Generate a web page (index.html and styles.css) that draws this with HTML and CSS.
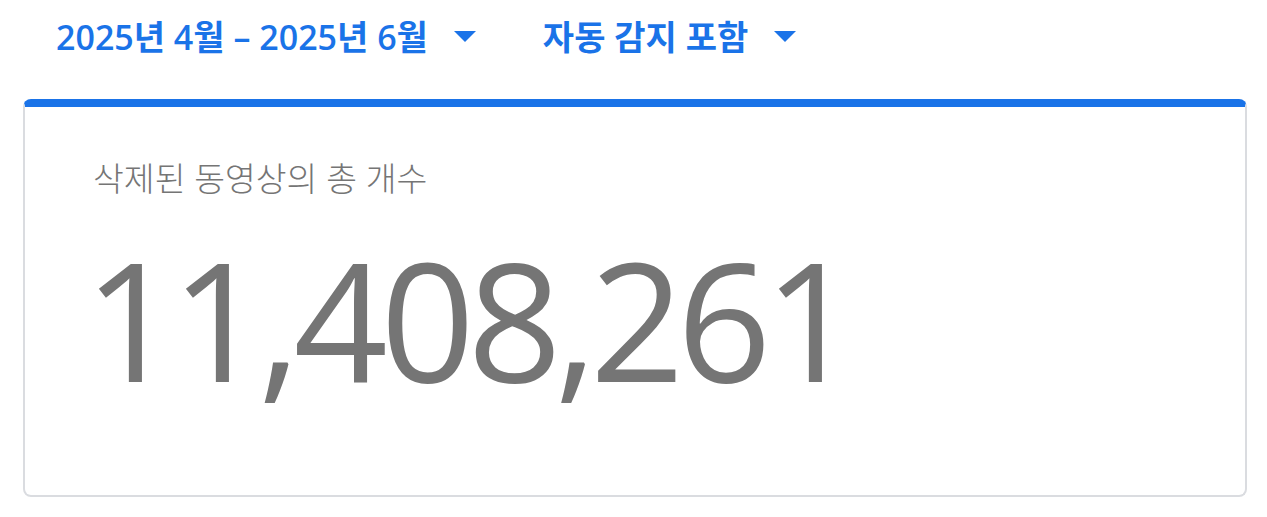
FILE: index.html
```html
<!DOCTYPE html>
<html lang="ko">

<head>
  <meta charset="UTF-8">
  <title>삭제된 동영상의 총 개수</title>
  <link rel="stylesheet" href="styles.css">
</head>

<body>
  <div class="filters">
    <div class="filter">
      <span>2025년 4월 – 2025년 6월</span>
      <span class="caret"></span>
    </div>
    <div class="filter">
      <span>자동 감지 포함</span>
      <span class="caret"></span>
    </div>
  </div>
  <div class="card">
    <div class="card-title">삭제된 동영상의 총 개수</div>
    <div class="card-value">11,408,261</div>
  </div>
</body>

</html>
```

FILE: styles.css
```css
html,
body {
  margin: 0;
  padding: 0;
  background: #fff;
}

body {
  font-family: "Open Sans", "Noto Sans CJK KR", sans-serif;
}

.filters {
  display: flex;
  align-items: center;
  gap: 67px;
  height: 70px;
  padding: 0 0 0 56px;
}

.filter {
  display: flex;
  align-items: center;
  gap: 26px;
  color: #1a73e8;
  font-size: 34px;
  font-weight: 600;
}

.caret {
  width: 0;
  height: 0;
  border-left: 11px solid transparent;
  border-right: 11px solid transparent;
  border-top: 11px solid #1a73e8;
  margin-top: 2px;
}

.card {
  margin: 29px 20px 0 23px;
  height: 388px;
  border: 2px solid #dadce0;
  border-top: 8px solid #1a73e8;
  border-radius: 8px;
  padding: 0 0 0 68px;
  color: #757575;
}

.card-title {
  margin-top: 51px;
  font-size: 33.5px;
  font-weight: 300;
  line-height: 40px;
}

.card-value {
  margin: 30px 0 0 -9px;
  font-size: 165px;
  font-weight: 400;
  line-height: 180px;
  letter-spacing: -7.3px;
}
```
